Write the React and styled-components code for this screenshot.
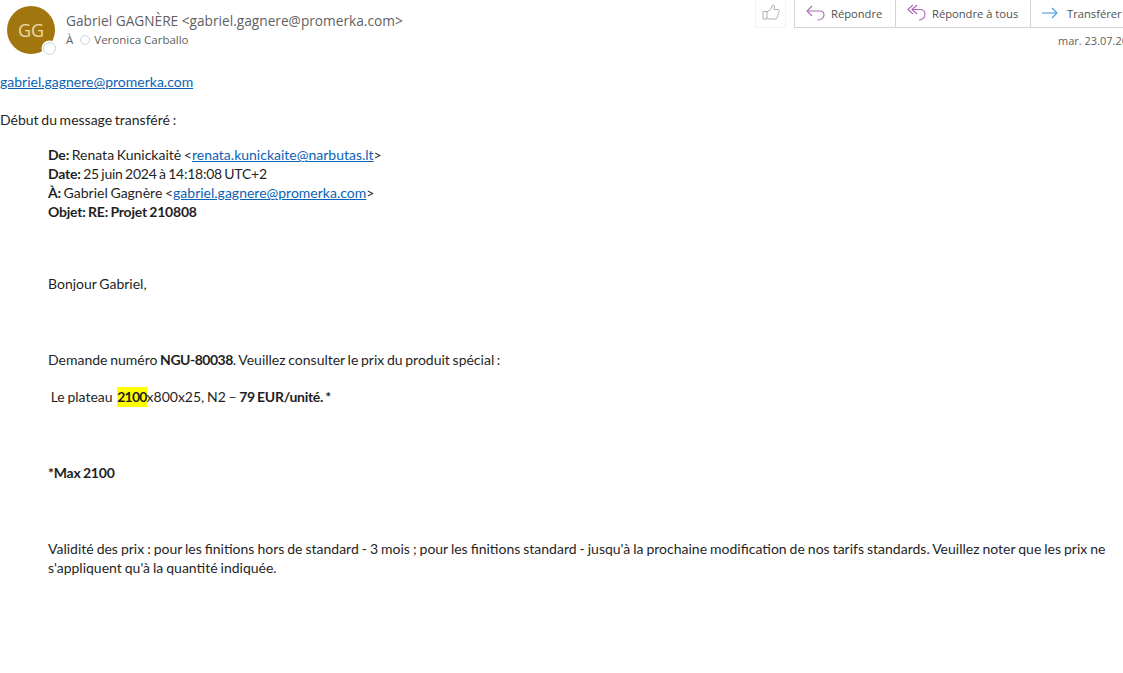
import React from 'react';
import styled, { createGlobalStyle } from 'styled-components';

const GlobalStyle = createGlobalStyle`
  html, body {
    margin: 0;
    padding: 0;
    height: 100%;
    background: #fff;
    overflow: hidden;
  }
`;

const Page = styled.div`
  width: 1123px;
  height: 673px;
  overflow: hidden;
  background: #fff;
`;

const Header = styled.header`
  display: flex;
  justify-content: space-between;
  height: 72px;
  padding-left: 7px;
  font-family: "Open Sans", sans-serif;
  color: #5f5f5f;
`;

const Sender = styled.div`
  display: flex;
  padding-top: 6px;
`;

const Avatar = styled.div`
  position: relative;
  display: flex;
  align-items: center;
  justify-content: center;
  width: 48px;
  height: 48px;
  border-radius: 50%;
  background: #a2760f;
  color: #eed9a4;
  font-size: 18px;
`;

const Presence = styled.span`
  position: absolute;
  right: -1px;
  bottom: -1px;
  width: 11px;
  height: 11px;
  border-radius: 50%;
  background: #fff;
  border: 1.5px solid #c3d4e0;
  box-shadow: 0 0 0 1.5px #fff;
`;

const SenderText = styled.div`
  margin-left: 11px;
`;

const SenderName = styled.div`
  margin-top: 5px;
  font-size: 13.7px;
  line-height: 20px;
`;

const Recipient = styled.div`
  display: flex;
  align-items: center;
  font-size: 11.5px;
  line-height: 16px;
  margin-top: 1px;
`;

const RecipientDot = styled.span`
  width: 8px;
  height: 8px;
  margin: 0 4px 0 7px;
  border-radius: 50%;
  border: 1px solid #c5d6e2;
`;

const Actions = styled.div`
  display: flex;
  flex-direction: column;
  align-items: flex-end;
  width: 368px;
  flex: none;
`;

const Toolbar = styled.div`
  display: flex;
  width: 100%;
`;

const LikeButton = styled.div`
  display: flex;
  align-items: center;
  justify-content: center;
  width: 33px;
  height: 28px;
  margin-right: 7px;
  border: 1px solid #f3f3f3;
  border-top: 0;
  box-sizing: border-box;

  svg {
    margin-bottom: 3px;
  }
`;

const ButtonGroup = styled.div`
  display: flex;
  flex: 1;
  height: 28px;
  box-sizing: border-box;
  margin-left: 1px;
  border-left: 1px solid #d4d4d4;
  border-bottom: 1px solid #d4d4d4;
`;

const ActionButton = styled.div`
  display: flex;
  align-items: center;
  flex: none;
  width: ${(p) => p.$width}px;
  box-sizing: border-box;
  padding-left: 10px;
  font-size: 11.2px;
  color: #505050;
  border-right: ${(p) => (p.$last ? 0 : '1px solid #d4d4d4')};
  white-space: nowrap;

  svg {
    flex: none;
    margin: 0 6px 2px 0;
  }
`;

const DateLabel = styled.div`
  width: 100%;
  box-sizing: border-box;
  padding-left: 303px;
  margin-top: 5px;
  font-size: 11px;
  line-height: 15px;
  white-space: nowrap;
  overflow: hidden;
`;

const Message = styled.main`
  font-family: Lato, sans-serif;
  font-size: 14px;
  line-height: 19px;
  word-spacing: -0.9px;
  color: #1f1f1f;
`;

const Strong = styled.b`
  letter-spacing: ${(p) => p.$spacing ?? -0.2}px;
`;

const Line = styled.div`
  margin-top: ${(p) => p.$gap || 0}px;
  letter-spacing: ${(p) => p.$spacing || 0}px;
  white-space: nowrap;
`;

const Quote = styled.div`
  padding: 0 16px 0 48px;
  margin-top: 16px;
`;

const Wrapped = styled.div`
  margin-top: 57px;
  word-spacing: -0.6px;
`;

const Link = styled.a`
  color: #0b63b5;
  text-decoration: underline;
`;

const Highlight = styled.b`
  background: #ffff00;
  display: inline-block;
  margin-left: 2px;
  line-height: 20px;
  letter-spacing: -0.8px;
`;

const ReplyIcon = () => (
  <svg width="20" height="18" viewBox="0 0 20 18" fill="none" stroke="#ab68bb" strokeWidth="1.1">
    <path d="M7 2 2 7l5 5" />
    <path d="M2 7h13c2.500 0 4 1.800 4 4s-2 5-6.500 5" />
  </svg>
);

const ReplyAllIcon = () => (
  <svg width="20" height="18" viewBox="0 0 20 18" fill="none" stroke="#ab68bb" strokeWidth="1.1">
    <path d="M7 1 2 5.500 7 10" />
    <path d="M11 1 6 5.500 11 10" />
    <path d="M6 5.500h8c3 0 5 2 5 5s-2.500 5.500-6 5.500" />
  </svg>
);

const ForwardIcon = () => (
  <svg width="20" height="14" viewBox="0 0 20 14" fill="none" stroke="#4a9bdc" strokeWidth="1.1">
    <path d="M1 7h15" />
    <path d="M11 2l5 5-5 5" />
  </svg>
);

const ThumbIcon = () => (
  <svg width="18" height="18" viewBox="0 0 18 18" fill="none" stroke="#b0b0b0" strokeWidth="1">
    <path d="M1 8.500h4v7.500H1z" />
    <path d="M5 9l3.500-2.500L11 2c1.500 0 2 1.500 1 4.500h4c1 0 1.500 1 1 2l-2 6.500c-.3.700-.8 1-1.500 1H8c-1.500 0-2-.8-3-1" />
  </svg>
);

const App = () => (
  <Page>
    <GlobalStyle />
    <Header>
      <Sender>
        <Avatar>
          GG
          <Presence />
        </Avatar>
        <SenderText>
          <SenderName>Gabriel GAGNÈRE &lt;gabriel.gagnere@promerka.com&gt;</SenderName>
          <Recipient>
            À<RecipientDot />Veronica Carballo
          </Recipient>
        </SenderText>
      </Sender>
      <Actions>
        <Toolbar>
          <LikeButton>
            <ThumbIcon />
          </LikeButton>
          <ButtonGroup>
            <ActionButton $width={101}>
              <ReplyIcon />
              Répondre
            </ActionButton>
            <ActionButton $width={135}>
              <ReplyAllIcon />
              Répondre à tous
            </ActionButton>
            <ActionButton $width={92} $last>
              <ForwardIcon />
              Transférer
            </ActionButton>
          </ButtonGroup>
        </Toolbar>
        <DateLabel>mar. 23.07.2024</DateLabel>
      </Actions>
    </Header>
    <Message>
      <Line>
        <Link>gabriel.gagnere@promerka.com</Link>
      </Line>
      <Line $gap={19}>Début du message transféré :</Line>
      <Quote>
        <Line>
          <Strong>De:</Strong> Renata Kunickaitė &lt;<Link>renata.kunickaite@narbutas.lt</Link>&gt;
        </Line>
        <Line $spacing={-0.25}>
          <Strong>Date:</Strong> 25 juin 2024 à 14:18:08 UTC+2
        </Line>
        <Line>
          <Strong>À:</Strong> Gabriel Gagnère &lt;<Link>gabriel.gagnere@promerka.com</Link>&gt;
        </Line>
        <Line>
          <Strong>Objet: RE: Projet 210808</Strong>
        </Line>
        <Line $gap={53}>Bonjour Gabriel,</Line>
        <Line $gap={57}>
          Demande numéro <Strong $spacing={-0.5}>NGU-80038</Strong>. Veuillez consulter le prix du produit spécial :
        </Line>
        <Line $gap={18}>
          &nbsp;Le plateau <Highlight>2100</Highlight>x800x25, N2 – <Strong $spacing={-0.3}>79 EUR/unité. *</Strong>
        </Line>
        <Line $gap={56}>
          <Strong>*Max 2100</Strong>
        </Line>
        <Wrapped>
          Validité des prix : pour les finitions hors de standard - 3 mois ; pour les finitions standard - jusqu'à la
          prochaine modification de nos tarifs standards. Veuillez noter que les prix ne s'appliquent qu'à la quantité
          indiquée.
        </Wrapped>
      </Quote>
    </Message>
  </Page>
);

export default App;
